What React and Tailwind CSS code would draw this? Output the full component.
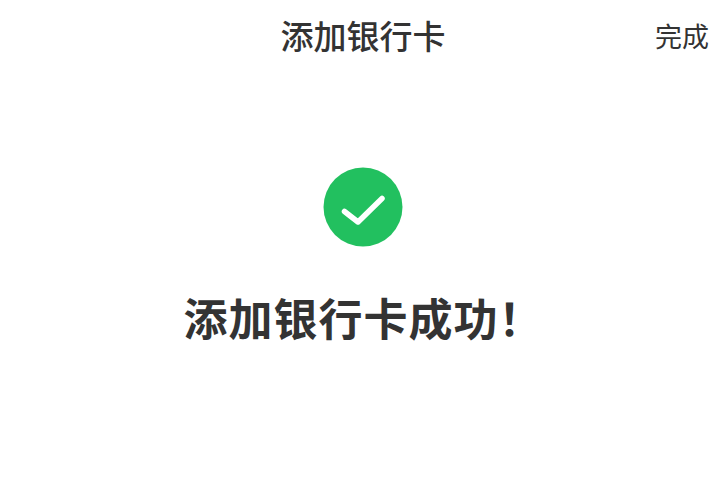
import React from 'react';

const cjk = "font-['Noto_Sans_CJK_SC','Noto_Sans',sans-serif]";

const App = () => {
  return (
    <div className={`w-[727px] h-[500px] bg-white overflow-hidden flex flex-col text-[#333333] ${cjk}`}>
      {/* Header */}
      <div className="grid grid-cols-[1fr_auto_1fr] items-center h-[70px]">
        <div />
        <div className="text-[33px] font-medium leading-none ml-[-1px]">添加银行卡</div>
        <div className="text-[27px] font-normal leading-none text-right pr-[18px]">完成</div>
      </div>

      {/* Success */}
      <div className="flex flex-col items-center mt-[97px]">
        <svg width="80" height="80" viewBox="0 0 80 80" className="ml-[-1px]">
          <circle cx="40" cy="40" r="39.5" fill="#22c05f" />
          <path d="M21.5 44.5 L35 55 L59 31.5" fill="none" stroke="#fff" strokeWidth="5.5" strokeLinecap="round" strokeLinejoin="round" />
        </svg>
        <div className="mt-[48px] text-[44px] font-semibold leading-none tracking-[1px]">添加银行卡成功！</div>
      </div>
    </div>
  );
};

export default App;
